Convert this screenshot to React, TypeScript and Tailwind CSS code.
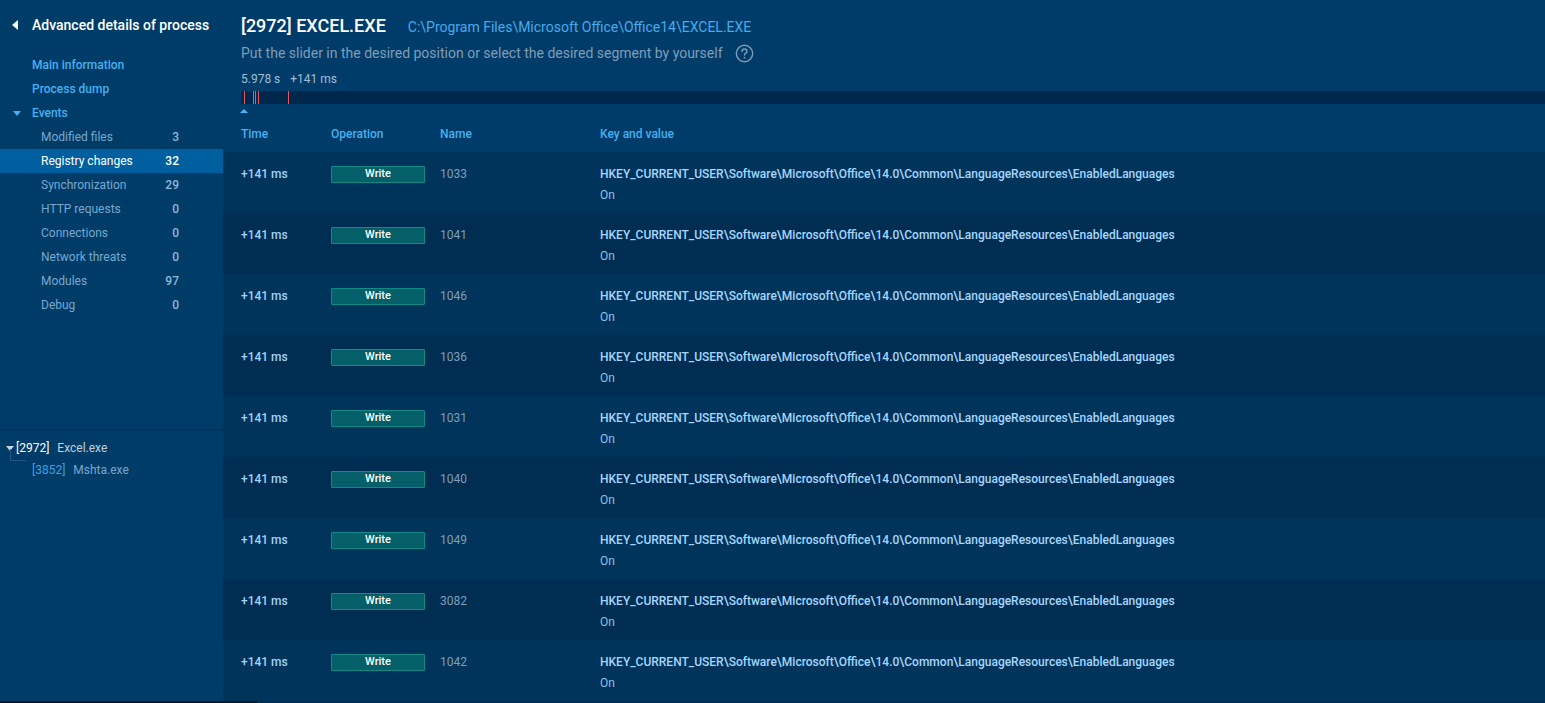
import React from 'react';

const SUB_ITEMS: { label: string; count: number; active?: boolean }[] = [
  { label: 'Modified files', count: 3 },
  { label: 'Registry changes', count: 32, active: true },
  { label: 'Synchronization', count: 29 },
  { label: 'HTTP requests', count: 0 },
  { label: 'Connections', count: 0 },
  { label: 'Network threats', count: 0 },
  { label: 'Modules', count: 97 },
  { label: 'Debug', count: 0 },
];

const ROWS = ['1033', '1041', '1046', '1036', '1031', '1040', '1049', '3082', '1042'];

const KEY = 'HKEY_CURRENT_USER\\Software\\Microsoft\\Office\\14.0\\Common\\LanguageResources\\EnabledLanguages';

function Sidebar() {
  return (
    <aside className="w-[223px] shrink-0 bg-[#003c68] flex flex-col">
      <div className="flex items-center h-[18px] mt-[16px]">
        <span className="ml-[12px] w-0 h-0 border-y-[5px] border-y-transparent border-r-[6px] border-r-white" />
        <span className="ml-[14px] text-[14px] font-medium text-white leading-[18px]">Advanced details of process</span>
      </div>

      <nav className="mt-[19px] text-[12px]">
        <div className="h-[24px] flex items-center pl-[32px] font-medium text-[#48aff0]">Main information</div>
        <div className="h-[24px] flex items-center pl-[32px] font-medium text-[#48aff0]">Process dump</div>
        <div className="h-[24px] flex items-center font-medium text-[#48aff0]">
          <span className="ml-[13px] w-0 h-0 border-x-[4px] border-x-transparent border-t-[5px] border-t-[#48aff0]" />
          <span className="ml-[11px]">Events</span>
        </div>
        {SUB_ITEMS.map((it) => (
          <div
            key={it.label}
            className={
              it.active
                ? 'h-[24px] flex items-center pl-[41px] pr-[44px] bg-[#005f9e] text-white'
                : 'h-[24px] flex items-center pl-[41px] pr-[44px] text-[#79a8cf]'
            }
          >
            <span className="flex-1">{it.label}</span>
            <span className={it.active ? 'font-medium text-white' : 'font-medium text-[#8fb8da]'}>{it.count}</span>
          </div>
        ))}
      </nav>

      <div className="mt-[112px] border-t border-[#012a4d]" />

      <div className="relative mt-[7px] text-[12px]">
        <span className="absolute left-[10px] top-[12px] w-px h-[11px] bg-[#1f5784]" />
        <span className="absolute left-[10px] top-[23px] w-[16px] h-px bg-[#1f5784]" />
        <div className="h-[22px] flex items-center">
          <span className="ml-[6px] w-0 h-0 border-x-[4px] border-x-transparent border-t-[5px] border-t-[#c8d6e2]" />
          <span className="ml-[2px] text-white">[2972]</span>
          <span className="ml-[8px] text-[#c3d0dc]">Excel.exe</span>
        </div>
        <div className="h-[22px] flex items-center pl-[32px]">
          <span className="text-[#3f9fe3]">[3852]</span>
          <span className="ml-[8px] text-[#7aa7cd]">Mshta.exe</span>
        </div>
      </div>
    </aside>
  );
}

function Row({ name, index }: { name: string; index: number }) {
  return (
    <div className={index % 2 === 0 ? 'h-[61px] flex pl-[18px] pt-[12px] bg-[#01345a]' : 'h-[61px] flex pl-[18px] pt-[12px] bg-[#002e52]'}>
      <div className="w-[90px] leading-[21px] font-medium text-[#a4d2f8]">+141 ms</div>
      <div className="w-[109px] h-[21px] flex items-center">
        <span className="w-[94px] h-[17px] flex items-center justify-center bg-[#045f69] border border-[#0f8a86] rounded-[1px] text-[11px] font-medium text-white">
          Write
        </span>
      </div>
      <div className="w-[160px] leading-[21px] text-[#7d9fbc]">{name}</div>
      <div className="flex flex-col leading-[21px]">
        <span className="font-medium text-[#a6d6ff]">{KEY}</span>
        <span className="text-[#8fc0e6]">On</span>
      </div>
    </div>
  );
}

export default function App() {
  return (
    <div className="relative w-[1545px] h-[703px] overflow-hidden flex bg-[#002e52]" style={{ fontFamily: 'Roboto, "Liberation Sans", sans-serif' }}>
      <Sidebar />

      <main className="flex-1 flex flex-col min-w-0">
        <header className="bg-[#003c69] pl-[18px]">
          <div className="flex items-baseline mt-[14px] h-[24px]">
            <span className="text-[18px] font-medium text-white leading-[24px]">[2972] EXCEL.EXE</span>
            <span className="ml-[22px] text-[14px] text-[#4aa9ea]">C:\Program Files\Microsoft Office\Office14\EXCEL.EXE</span>
          </div>
          <div className="flex items-center mt-[5px] h-[20px]">
            <span className="text-[14px] text-[#7f9cb8]">Put the slider in the desired position or select the desired segment by yourself</span>
            <svg className="ml-[12px]" width="19" height="19" viewBox="0 0 20 20" fill="none">
              <circle cx="10" cy="10" r="8.6" stroke="#7f9cb8" strokeWidth="1.5" />
              <path d="M7.4 7.8a2.6 2.6 0 0 1 5.2 0c0 1.7-2.6 1.9-2.6 3.8" stroke="#7f9cb8" strokeWidth="1.5" strokeLinecap="round" />
              <circle cx="10" cy="14.4" r="0.95" fill="#7f9cb8" />
            </svg>
          </div>
          <div className="flex mt-[9px] h-[14px] items-center text-[12px] text-[#a4bdd3] gap-[10px]">
            <span>5.978 s</span>
            <span>+141 ms</span>
          </div>
          <div className="relative mt-[5px] h-[13px] bg-[#00284c]">
            <span className="absolute left-[3px] top-0 w-px h-full bg-[#f0545a]" />
            <span className="absolute left-[12px] top-0 w-px h-full bg-[#f0545a]" />
            <span className="absolute left-[14px] top-0 w-px h-full bg-[#f0545a]" />
            <span className="absolute left-[17px] top-0 w-px h-full bg-[#f0545a]" />
            <span className="absolute left-[47px] top-0 w-px h-full bg-[#f0545a]" />
          </div>
          <div className="h-[14px] flex items-center">
            <span className="ml-[-1px] w-0 h-0 border-x-[4px] border-x-transparent border-b-[4px] border-b-[#4fb3f4]" />
          </div>
          <div className="h-[34px] flex items-start text-[12px] font-medium text-[#48aff0] leading-[33px]">
            <span className="w-[90px]">Time</span>
            <span className="w-[109px]">Operation</span>
            <span className="w-[160px]">Name</span>
            <span>Key and value</span>
          </div>
        </header>

        <section className="text-[12px]">
          {ROWS.map((n, i) => (
            <Row key={i} name={n} index={i} />
          ))}
        </section>
      </main>

      <div className="absolute left-0 bottom-0 w-[257px] h-[2px] bg-[#0a1620]" />
    </div>
  );
}
